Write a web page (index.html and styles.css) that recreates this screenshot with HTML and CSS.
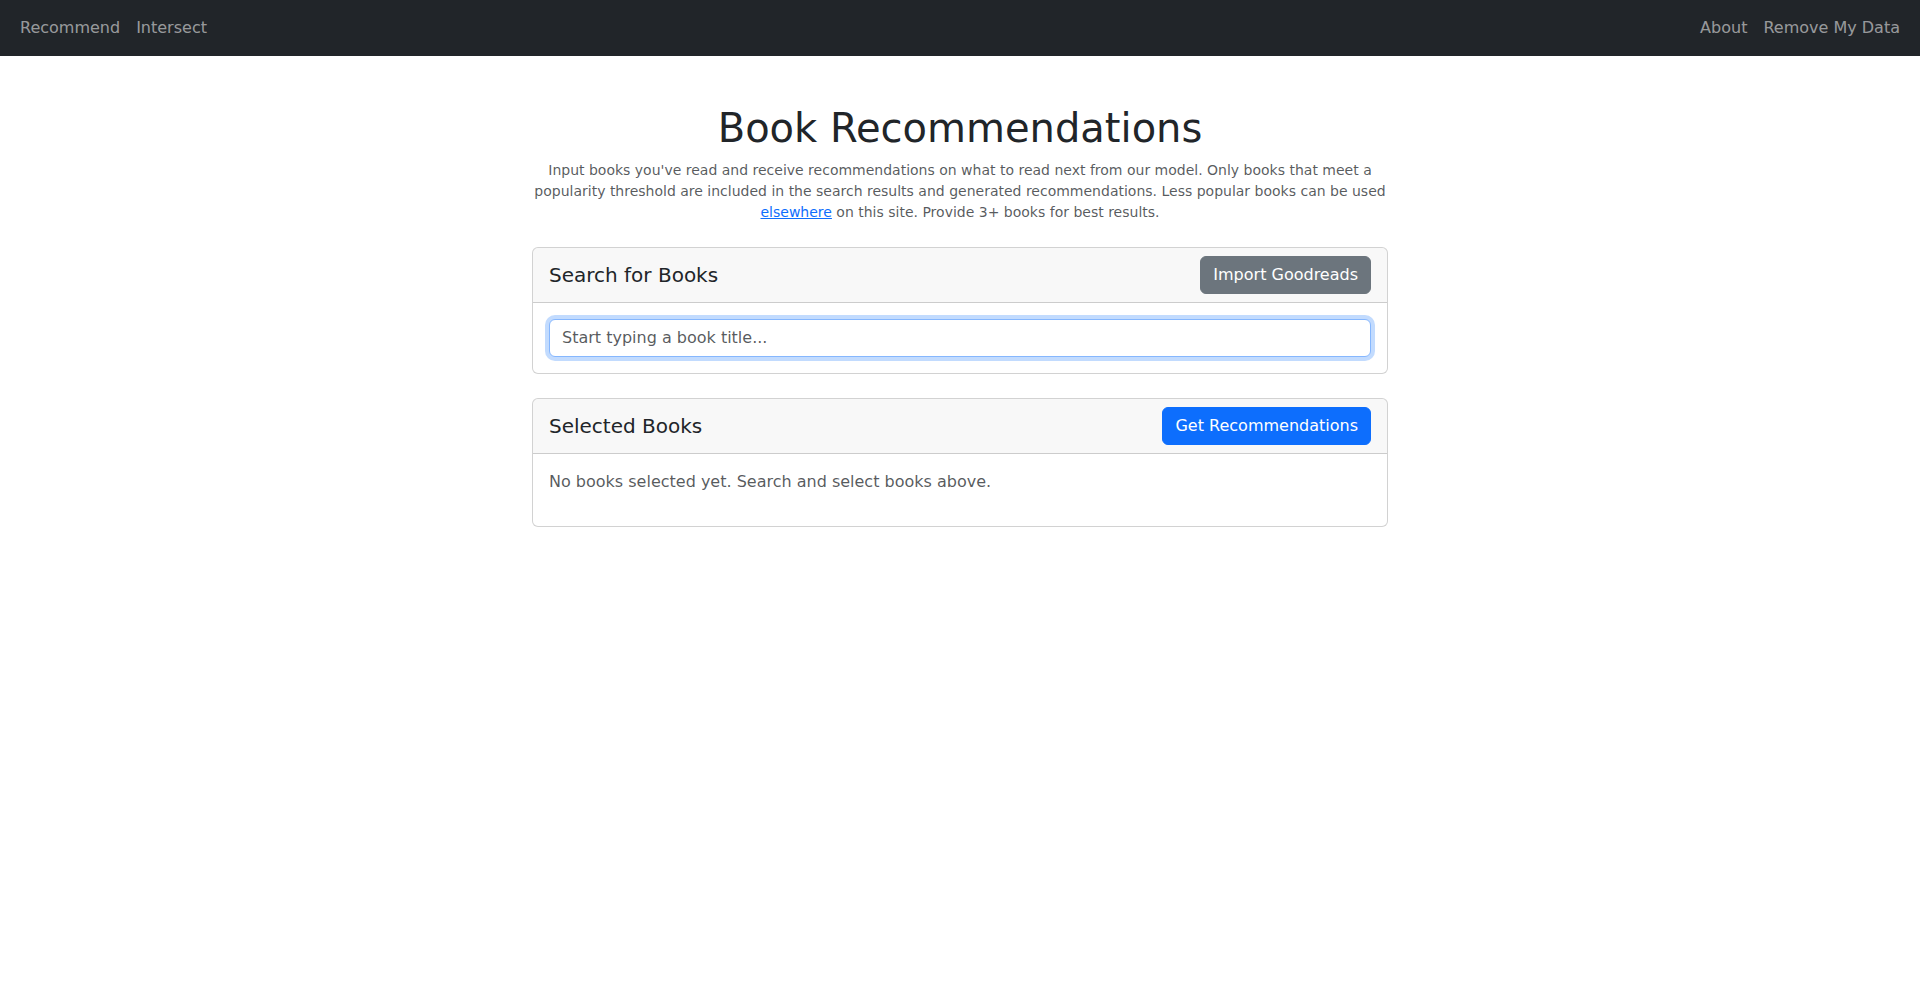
FILE: index.html
```html
<!DOCTYPE html>
<html lang="en">
<head>
<meta charset="utf-8">
<title>Book Recommendations</title>
<link rel="stylesheet" href="styles.css">
</head>
<body>
<nav class="navbar">
  <div class="nav-group">
    <a class="nav-link" href="#">Recommend</a>
    <a class="nav-link" href="#">Intersect</a>
  </div>
  <div class="nav-group">
    <a class="nav-link" href="#">About</a>
    <a class="nav-link" href="#">Remove My Data</a>
  </div>
</nav>
<main class="main">
  <h1 class="title">Book Recommendations</h1>
  <p class="intro">Input books you've read and receive recommendations on what to read next from our model. Only books that meet a popularity threshold are included in the search results and generated recommendations. Less popular books can be used <a href="#">elsewhere</a> on this site. Provide 3+ books for best results.</p>

  <section class="card">
    <div class="card-header">
      <h5 class="card-title">Search for Books</h5>
      <button class="btn btn-secondary" type="button">Import Goodreads</button>
    </div>
    <div class="card-body">
      <input class="form-control" type="text" placeholder="Start typing a book title..." autofocus>
    </div>
  </section>

  <section class="card">
    <div class="card-header">
      <h5 class="card-title">Selected Books</h5>
      <button class="btn btn-primary" type="button">Get Recommendations</button>
    </div>
    <div class="card-body">
      <p class="muted">No books selected yet. Search and select books above.</p>
    </div>
  </section>
</main>
</body>
</html>
```
FILE: styles.css
```css
* { box-sizing: border-box; }
html, body { margin: 0; padding: 0; }
body {
  font-family: "DejaVu Sans", "Noto Sans", sans-serif;
  font-size: 16px;
  line-height: 1.5;
  color: #212529;
  background: #fff;
}
.navbar {
  background: #212529;
  display: flex;
  justify-content: space-between;
  align-items: center;
  padding: 8px 12px;
  height: 56px;
}
.nav-group { display: flex; }
.nav-link {
  color: rgba(255, 255, 255, 0.55);
  text-decoration: none;
  padding: 8px;
  line-height: 24px;
}
.main {
  width: 856px;
  margin: 48px auto 0;
}
.title {
  font-size: 40px;
  font-weight: 500;
  line-height: 1.2;
  margin: 0 0 8px;
  text-align: center;
}
.intro {
  font-size: 14px;
  line-height: 21px;
  color: rgba(33, 37, 41, 0.75);
  text-align: center;
  margin: 0 0 24px;
}
.intro a { color: #0d6efd; text-decoration: underline; }
.card {
  border: 1px solid rgba(0, 0, 0, 0.175);
  border-radius: 6px;
  margin-bottom: 24px;
  background: #fff;
}
.card-header {
  display: flex;
  justify-content: space-between;
  align-items: center;
  padding: 8px 16px;
  background: rgba(33, 37, 41, 0.03);
  border-bottom: 1px solid rgba(0, 0, 0, 0.175);
  border-radius: 5px 5px 0 0;
}
.card-title {
  margin: 0;
  font-size: 20px;
  font-weight: 500;
  line-height: 1.2;
}
.card-body { padding: 16px; }
.btn {
  font-family: inherit;
  font-size: 16px;
  line-height: 24px;
  padding: 6px 12px;
  border: 1px solid transparent;
  border-radius: 6px;
  color: #fff;
  cursor: pointer;
}
.btn-secondary { background: #6c757d; border-color: #6c757d; }
.btn-primary { background: #0d6efd; border-color: #0d6efd; }
.form-control {
  display: block;
  width: 100%;
  font-family: inherit;
  font-size: 16px;
  line-height: 24px;
  padding: 6px 12px;
  color: #212529;
  background: #fff;
  border: 1px solid #86b7fe;
  border-radius: 6px;
  outline: 0;
  box-shadow: 0 0 0 4px rgba(13, 110, 253, 0.25);
}
.form-control::placeholder { color: rgba(33, 37, 41, 0.75); }
.muted { color: rgba(33, 37, 41, 0.75); margin: 0 0 16px; }
```
